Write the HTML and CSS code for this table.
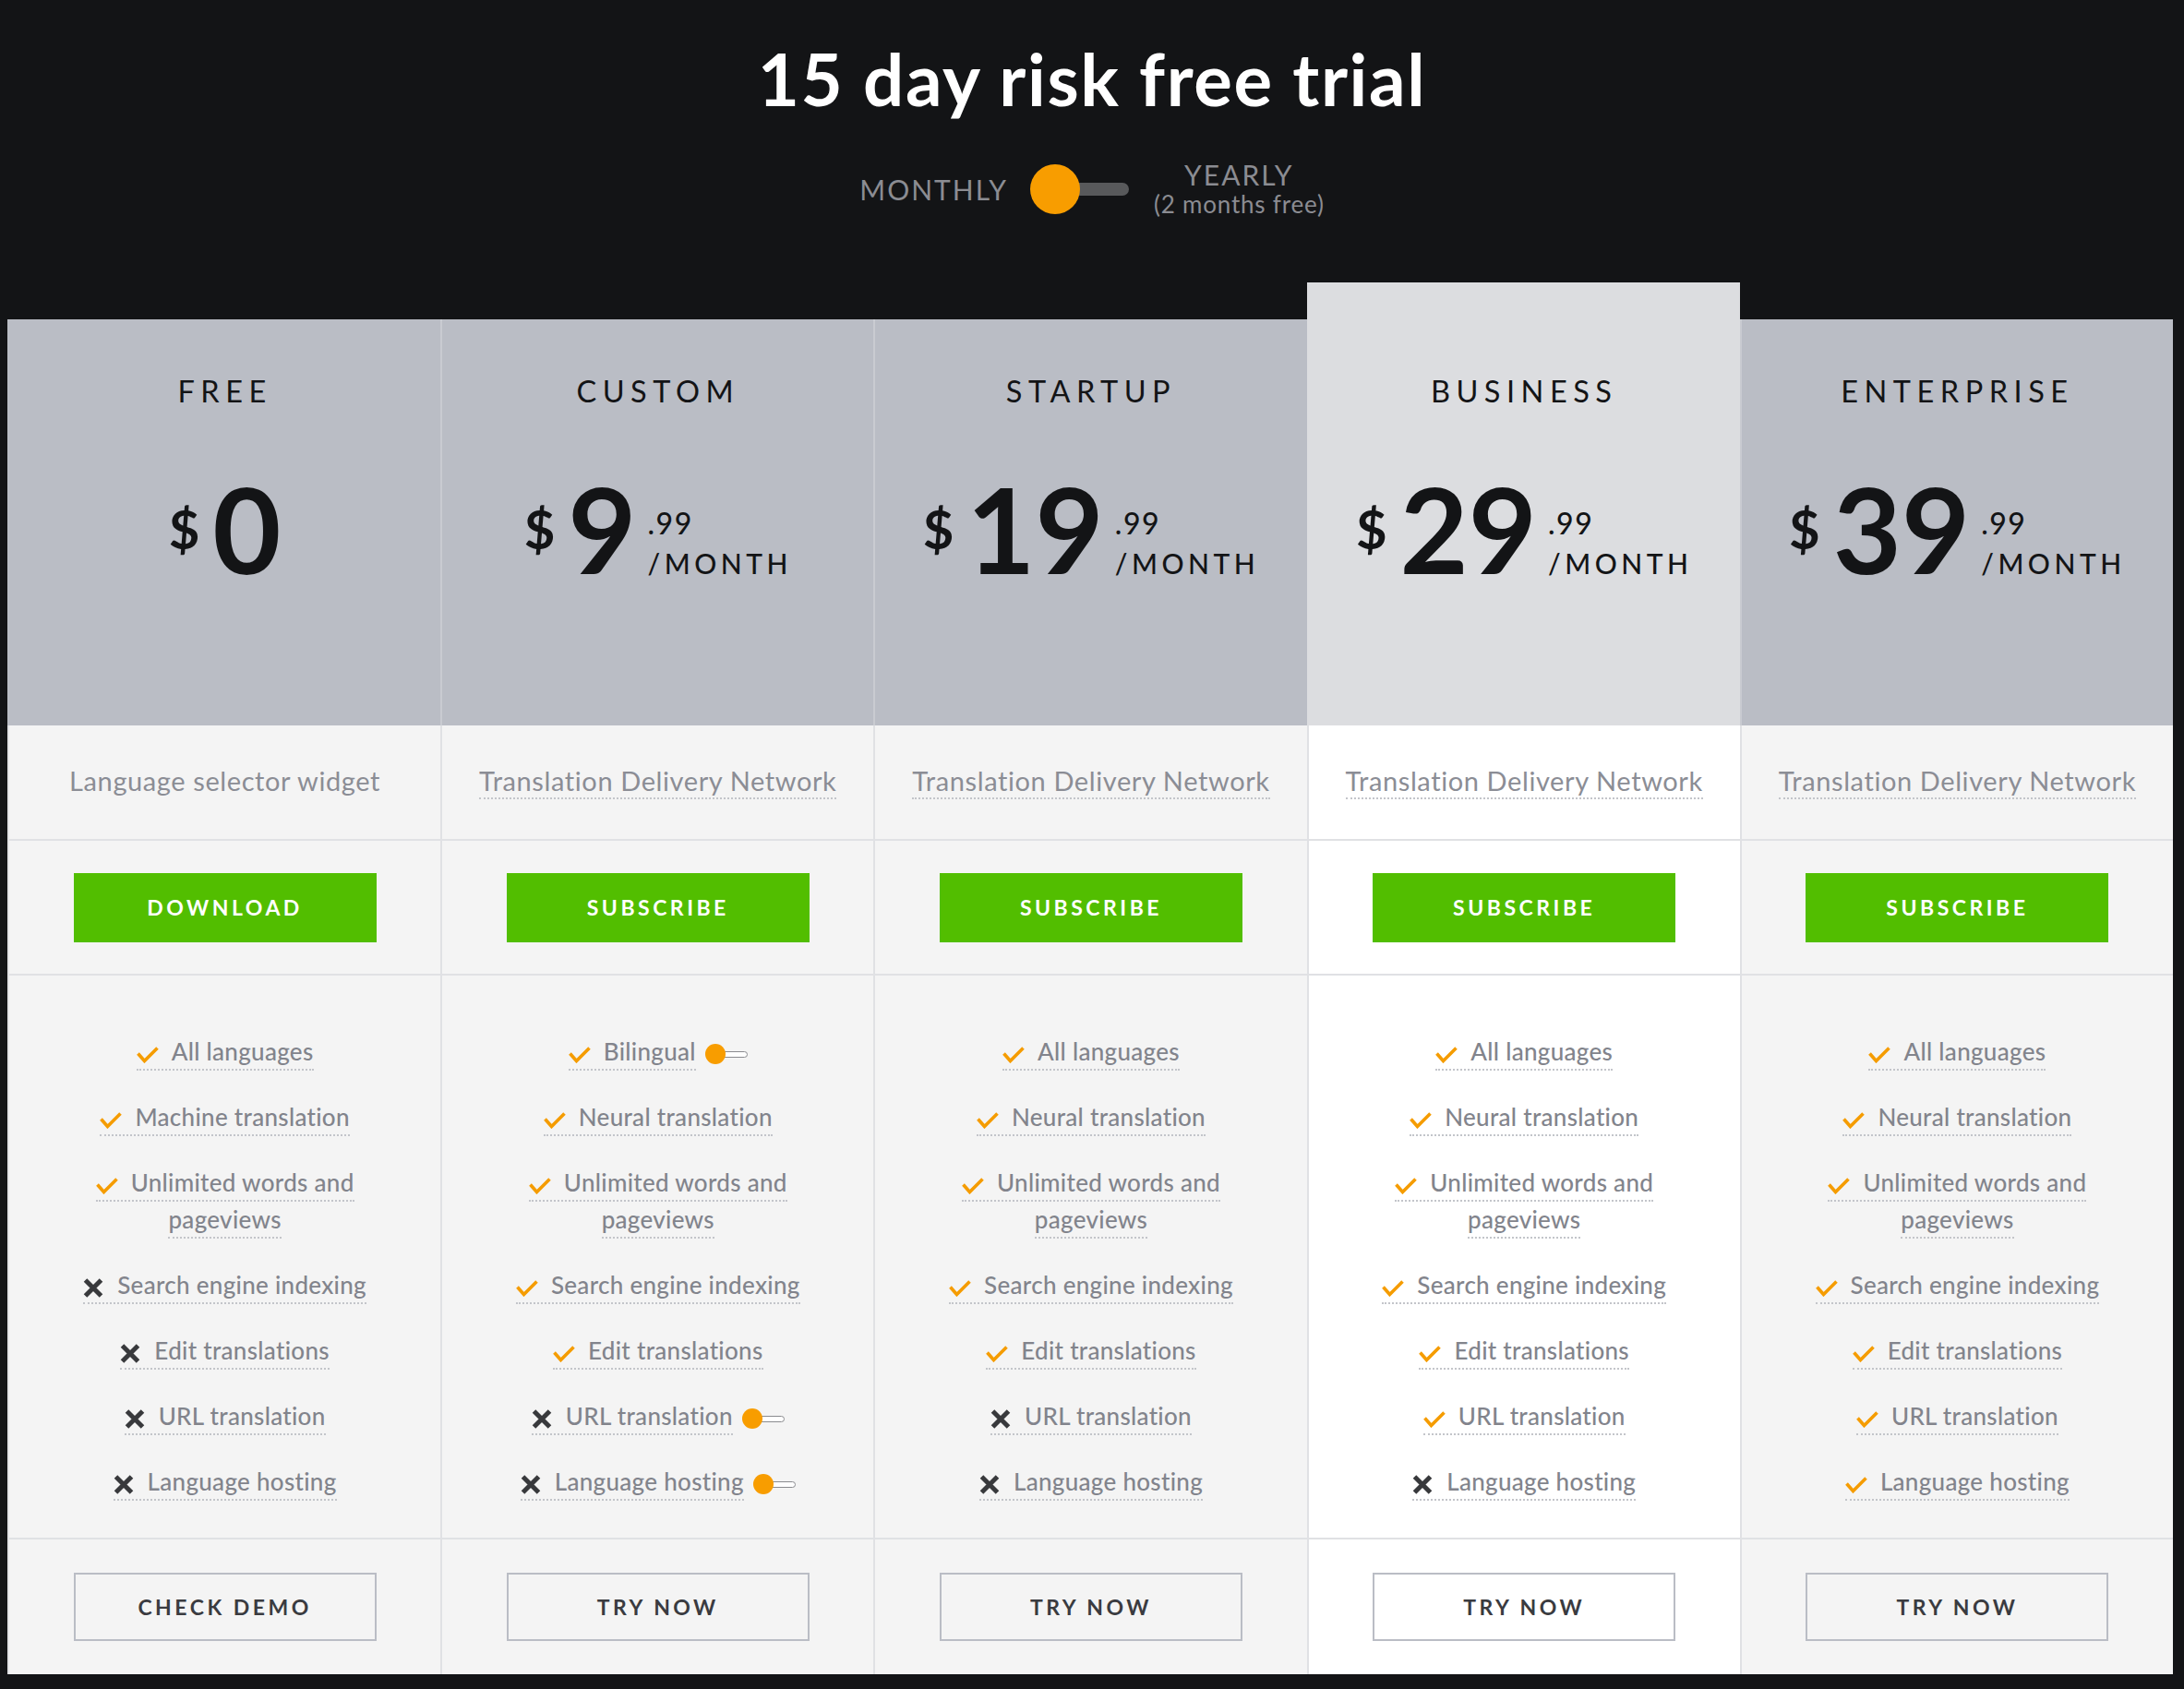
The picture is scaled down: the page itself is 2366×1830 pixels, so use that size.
FILE: index.html
```html
<!DOCTYPE html>
<html lang="en">
<head>
<meta charset="utf-8">
<title>Pricing</title>
<link rel="stylesheet" href="styles.css">
</head>
<body>
<header class="hero">
  <h1 class="title">15 day risk free trial</h1>
  <div class="billing">
    <span class="billing-label">MONTHLY</span>
    <span class="switch"><span class="switch-knob"></span><span class="switch-track"></span></span>
    <span class="billing-alt"><span class="billing-label">YEARLY</span><span class="billing-note">(2 months free)</span></span>
  </div>
</header>

<main class="plans">
  <!-- FREE -->
  <section class="plan">
    <div class="plan-head">
      <div class="plan-name">FREE</div>
      <div class="price"><span class="cur">$</span><span class="amt">0</span></div>
    </div>
    <div class="plan-desc"><span class="desc plain">Language selector widget</span></div>
    <div class="plan-cta"><a class="btn btn-green">DOWNLOAD</a></div>
    <ul class="features">
      <li><span class="feat"><svg class="ico ico-yes" viewBox="0 0 24 18"><path d="M1.5 7.5 L8.5 15.5 L22.5 1.5"/></svg>All languages</span></li>
      <li><span class="feat"><svg class="ico ico-yes" viewBox="0 0 24 18"><path d="M1.5 7.5 L8.5 15.5 L22.5 1.5"/></svg>Machine translation</span></li>
      <li><span class="feat"><svg class="ico ico-yes" viewBox="0 0 24 18"><path d="M1.5 7.5 L8.5 15.5 L22.5 1.5"/></svg>Unlimited words and pageviews</span></li>
      <li><span class="feat"><svg class="ico ico-no" viewBox="0 0 22 21"><path d="M2.5 2 L19.5 19 M19.5 2 L2.5 19"/></svg>Search engine indexing</span></li>
      <li><span class="feat"><svg class="ico ico-no" viewBox="0 0 22 21"><path d="M2.5 2 L19.5 19 M19.5 2 L2.5 19"/></svg>Edit translations</span></li>
      <li><span class="feat"><svg class="ico ico-no" viewBox="0 0 22 21"><path d="M2.5 2 L19.5 19 M19.5 2 L2.5 19"/></svg>URL translation</span></li>
      <li><span class="feat"><svg class="ico ico-no" viewBox="0 0 22 21"><path d="M2.5 2 L19.5 19 M19.5 2 L2.5 19"/></svg>Language hosting</span></li>
    </ul>
    <div class="plan-foot"><a class="btn btn-outline">CHECK DEMO</a></div>
  </section>

  <!-- CUSTOM -->
  <section class="plan">
    <div class="plan-head">
      <div class="plan-name">CUSTOM</div>
      <div class="price"><span class="cur">$</span><span class="amt">9</span><span class="tail"><span class="cents">.99</span><span class="per">/MONTH</span></span></div>
    </div>
    <div class="plan-desc"><span class="desc">Translation Delivery Network</span></div>
    <div class="plan-cta"><a class="btn btn-green">SUBSCRIBE</a></div>
    <ul class="features">
      <li><span class="feat"><svg class="ico ico-yes" viewBox="0 0 24 18"><path d="M1.5 7.5 L8.5 15.5 L22.5 1.5"/></svg>Bilingual</span><span class="mini"><span class="mini-knob"></span><span class="mini-track"></span></span></li>
      <li><span class="feat"><svg class="ico ico-yes" viewBox="0 0 24 18"><path d="M1.5 7.5 L8.5 15.5 L22.5 1.5"/></svg>Neural translation</span></li>
      <li><span class="feat"><svg class="ico ico-yes" viewBox="0 0 24 18"><path d="M1.5 7.5 L8.5 15.5 L22.5 1.5"/></svg>Unlimited words and pageviews</span></li>
      <li><span class="feat"><svg class="ico ico-yes" viewBox="0 0 24 18"><path d="M1.5 7.5 L8.5 15.5 L22.5 1.5"/></svg>Search engine indexing</span></li>
      <li><span class="feat"><svg class="ico ico-yes" viewBox="0 0 24 18"><path d="M1.5 7.5 L8.5 15.5 L22.5 1.5"/></svg>Edit translations</span></li>
      <li><span class="feat"><svg class="ico ico-no" viewBox="0 0 22 21"><path d="M2.5 2 L19.5 19 M19.5 2 L2.5 19"/></svg>URL translation</span><span class="mini"><span class="mini-knob"></span><span class="mini-track"></span></span></li>
      <li><span class="feat"><svg class="ico ico-no" viewBox="0 0 22 21"><path d="M2.5 2 L19.5 19 M19.5 2 L2.5 19"/></svg>Language hosting</span><span class="mini"><span class="mini-knob"></span><span class="mini-track"></span></span></li>
    </ul>
    <div class="plan-foot"><a class="btn btn-outline">TRY NOW</a></div>
  </section>

  <!-- STARTUP -->
  <section class="plan">
    <div class="plan-head">
      <div class="plan-name">STARTUP</div>
      <div class="price"><span class="cur">$</span><span class="amt">19</span><span class="tail"><span class="cents">.99</span><span class="per">/MONTH</span></span></div>
    </div>
    <div class="plan-desc"><span class="desc">Translation Delivery Network</span></div>
    <div class="plan-cta"><a class="btn btn-green">SUBSCRIBE</a></div>
    <ul class="features">
      <li><span class="feat"><svg class="ico ico-yes" viewBox="0 0 24 18"><path d="M1.5 7.5 L8.5 15.5 L22.5 1.5"/></svg>All languages</span></li>
      <li><span class="feat"><svg class="ico ico-yes" viewBox="0 0 24 18"><path d="M1.5 7.5 L8.5 15.5 L22.5 1.5"/></svg>Neural translation</span></li>
      <li><span class="feat"><svg class="ico ico-yes" viewBox="0 0 24 18"><path d="M1.5 7.5 L8.5 15.5 L22.5 1.5"/></svg>Unlimited words and pageviews</span></li>
      <li><span class="feat"><svg class="ico ico-yes" viewBox="0 0 24 18"><path d="M1.5 7.5 L8.5 15.5 L22.5 1.5"/></svg>Search engine indexing</span></li>
      <li><span class="feat"><svg class="ico ico-yes" viewBox="0 0 24 18"><path d="M1.5 7.5 L8.5 15.5 L22.5 1.5"/></svg>Edit translations</span></li>
      <li><span class="feat"><svg class="ico ico-no" viewBox="0 0 22 21"><path d="M2.5 2 L19.5 19 M19.5 2 L2.5 19"/></svg>URL translation</span></li>
      <li><span class="feat"><svg class="ico ico-no" viewBox="0 0 22 21"><path d="M2.5 2 L19.5 19 M19.5 2 L2.5 19"/></svg>Language hosting</span></li>
    </ul>
    <div class="plan-foot"><a class="btn btn-outline">TRY NOW</a></div>
  </section>

  <!-- BUSINESS -->
  <section class="plan featured">
    <div class="plan-head">
      <div class="plan-name">BUSINESS</div>
      <div class="price"><span class="cur">$</span><span class="amt">29</span><span class="tail"><span class="cents">.99</span><span class="per">/MONTH</span></span></div>
    </div>
    <div class="plan-desc"><span class="desc">Translation Delivery Network</span></div>
    <div class="plan-cta"><a class="btn btn-green">SUBSCRIBE</a></div>
    <ul class="features">
      <li><span class="feat"><svg class="ico ico-yes" viewBox="0 0 24 18"><path d="M1.5 7.5 L8.5 15.5 L22.5 1.5"/></svg>All languages</span></li>
      <li><span class="feat"><svg class="ico ico-yes" viewBox="0 0 24 18"><path d="M1.5 7.5 L8.5 15.5 L22.5 1.5"/></svg>Neural translation</span></li>
      <li><span class="feat"><svg class="ico ico-yes" viewBox="0 0 24 18"><path d="M1.5 7.5 L8.5 15.5 L22.5 1.5"/></svg>Unlimited words and pageviews</span></li>
      <li><span class="feat"><svg class="ico ico-yes" viewBox="0 0 24 18"><path d="M1.5 7.5 L8.5 15.5 L22.5 1.5"/></svg>Search engine indexing</span></li>
      <li><span class="feat"><svg class="ico ico-yes" viewBox="0 0 24 18"><path d="M1.5 7.5 L8.5 15.5 L22.5 1.5"/></svg>Edit translations</span></li>
      <li><span class="feat"><svg class="ico ico-yes" viewBox="0 0 24 18"><path d="M1.5 7.5 L8.5 15.5 L22.5 1.5"/></svg>URL translation</span></li>
      <li><span class="feat"><svg class="ico ico-no" viewBox="0 0 22 21"><path d="M2.5 2 L19.5 19 M19.5 2 L2.5 19"/></svg>Language hosting</span></li>
    </ul>
    <div class="plan-foot"><a class="btn btn-outline">TRY NOW</a></div>
  </section>

  <!-- ENTERPRISE -->
  <section class="plan">
    <div class="plan-head">
      <div class="plan-name">ENTERPRISE</div>
      <div class="price"><span class="cur">$</span><span class="amt">39</span><span class="tail"><span class="cents">.99</span><span class="per">/MONTH</span></span></div>
    </div>
    <div class="plan-desc"><span class="desc">Translation Delivery Network</span></div>
    <div class="plan-cta"><a class="btn btn-green">SUBSCRIBE</a></div>
    <ul class="features">
      <li><span class="feat"><svg class="ico ico-yes" viewBox="0 0 24 18"><path d="M1.5 7.5 L8.5 15.5 L22.5 1.5"/></svg>All languages</span></li>
      <li><span class="feat"><svg class="ico ico-yes" viewBox="0 0 24 18"><path d="M1.5 7.5 L8.5 15.5 L22.5 1.5"/></svg>Neural translation</span></li>
      <li><span class="feat"><svg class="ico ico-yes" viewBox="0 0 24 18"><path d="M1.5 7.5 L8.5 15.5 L22.5 1.5"/></svg>Unlimited words and pageviews</span></li>
      <li><span class="feat"><svg class="ico ico-yes" viewBox="0 0 24 18"><path d="M1.5 7.5 L8.5 15.5 L22.5 1.5"/></svg>Search engine indexing</span></li>
      <li><span class="feat"><svg class="ico ico-yes" viewBox="0 0 24 18"><path d="M1.5 7.5 L8.5 15.5 L22.5 1.5"/></svg>Edit translations</span></li>
      <li><span class="feat"><svg class="ico ico-yes" viewBox="0 0 24 18"><path d="M1.5 7.5 L8.5 15.5 L22.5 1.5"/></svg>URL translation</span></li>
      <li><span class="feat"><svg class="ico ico-yes" viewBox="0 0 24 18"><path d="M1.5 7.5 L8.5 15.5 L22.5 1.5"/></svg>Language hosting</span></li>
    </ul>
    <div class="plan-foot"><a class="btn btn-outline">TRY NOW</a></div>
  </section>
</main>
</body>
</html>
```

FILE: styles.css
```css
* { box-sizing: border-box; }

body {
  margin: 0;
  background: #131416;
  font-family: Lato, "Liberation Sans", sans-serif;
  color: #131416;
}

/* ---------- hero ---------- */
.hero {
  height: 346px;
  padding-top: 46px;
  display: flex;
  flex-direction: column;
  align-items: center;
}

.title {
  margin: 0;
  font-size: 78px;
  line-height: 1;
  font-weight: 700;
  color: #ffffff;
  letter-spacing: 1.6px;
}

.billing {
  margin-top: 50px;
  display: flex;
  align-items: center;
  color: #8b8c92;
}

.billing-label {
  font-size: 30px;
  line-height: 30px;
  letter-spacing: 2px;
}

.switch {
  display: flex;
  align-items: center;
  margin: 0 27px 0 24px;
}

.switch-knob {
  position: relative;
  z-index: 1;
  width: 54px;
  height: 54px;
  border-radius: 50%;
  background: #f89d00;
}

.switch-track {
  width: 80px;
  height: 14px;
  margin-left: -27px;
  border-radius: 7px;
  background: #58595b;
}

.billing-alt {
  display: flex;
  flex-direction: column;
  align-items: center;
}

.billing-note {
  margin-top: 3px;
  font-size: 26px;
  line-height: 28px;
  letter-spacing: 0.8px;
}

/* ---------- plans ---------- */
.plans {
  width: 2346px;
  margin-left: 8px;
  display: grid;
  grid-template-columns: repeat(5, 1fr);
}

.plan {
  display: flex;
  flex-direction: column;
}

.plan > * {
  border-left: 2px solid #e0e1e4;
}

.plan-head {
  height: 440px;
  padding-top: 62px;
  background: #babdc5;
  border-left-color: #c9cbd1;
  display: flex;
  flex-direction: column;
  align-items: center;
}

.plan:first-child .plan-head { border-left-color: #babdc5; }

.plan.featured .plan-head {
  height: 480px;
  margin-top: -40px;
  padding-top: 102px;
  background: #dcdde0;
  border-left-color: #dcdde0;
}

.plan-name {
  font-size: 32.5px;
  line-height: 1;
  letter-spacing: 6.5px;
  color: #131416;
}

.price {
  margin-top: 68px;
  display: flex;
  align-items: center;
  justify-content: center;
  color: #131416;
}

.cur {
  font-size: 58px;
  line-height: 1;
  font-weight: 700;
  margin-right: 14px;
}

.amt {
  font-size: 128px;
  line-height: 1;
  font-weight: 700;
  letter-spacing: 0;
}

.tail {
  align-self: flex-end;
  margin: 0 0 12px 12px;
  display: flex;
  flex-direction: column;
  align-items: flex-start;
}

.cents {
  font-size: 32px;
  line-height: 1;
  font-weight: 500;
  letter-spacing: 1.5px;
  margin-bottom: 12px;
}

.per {
  font-size: 30px;
  line-height: 1;
  font-weight: 500;
  letter-spacing: 4.5px;
}

.plan-desc {
  height: 125px;
  background: #f4f4f4;
  border-bottom: 2px solid #e0e1e4;
  display: flex;
  align-items: center;
  justify-content: center;
}

.desc {
  font-size: 29px;
  line-height: 1.2;
  color: #8b8d95;
  letter-spacing: 0.6px;
  border-bottom: 2px dotted #c3c5ca;
}

.desc.plain { border-bottom-color: transparent; }

.plan-cta {
  height: 146px;
  background: #f4f4f4;
  border-bottom: 2px solid #e0e1e4;
  display: flex;
  align-items: center;
  justify-content: center;
}

.btn {
  width: 328px;
  height: 75px;
  display: flex;
  align-items: center;
  justify-content: center;
  font-size: 23px;
  font-weight: 700;
  letter-spacing: 3.5px;
  text-decoration: none;
}

.btn-green {
  background: #52be00;
  color: #ffffff;
}

.btn-outline {
  height: 74px;
  border: 2px solid #babdc5;
  color: #3a3b40;
}

.features {
  height: 611px;
  margin: 0;
  padding: 62px 58px 0;
  list-style: none;
  background: #f4f4f4;
  border-bottom: 2px solid #e0e1e4;
  text-align: center;
}

.features li {
  font-size: 26px;
  line-height: 40px;
  margin-bottom: 31px;
  color: #82848c;
  font-weight: 500;
  letter-spacing: 0.3px;
}

.feat {
  padding-bottom: 3px;
  border-bottom: 2px dotted #c3c5ca;
}

.ico {
  display: inline-block;
  fill: none;
  margin-right: 14px;
}

.ico-yes {
  width: 24px;
  height: 18px;
  vertical-align: -3px;
  stroke: #f59c00;
  stroke-width: 3.6;
  stroke-linejoin: miter;
}

.ico-no {
  width: 22px;
  height: 21px;
  margin-right: 15px;
  vertical-align: -4px;
  stroke: #38393c;
  stroke-width: 5;
}

.mini {
  display: inline-flex;
  align-items: center;
  margin-left: 10px;
  vertical-align: -4px;
}

.mini-knob {
  position: relative;
  z-index: 1;
  width: 22px;
  height: 22px;
  border-radius: 50%;
  background: #f89d00;
}

.mini-track {
  width: 30px;
  height: 7px;
  margin-left: -6px;
  border: 1.5px solid #8a8b8f;
  border-radius: 4px;
  background: #ffffff;
}

.plan-foot {
  height: 146px;
  background: #f4f4f4;
  display: flex;
  align-items: center;
  justify-content: center;
}

.plan.featured .plan-desc,
.plan.featured .plan-cta,
.plan.featured .features,
.plan.featured .plan-foot {
  background: #ffffff;
}
```
